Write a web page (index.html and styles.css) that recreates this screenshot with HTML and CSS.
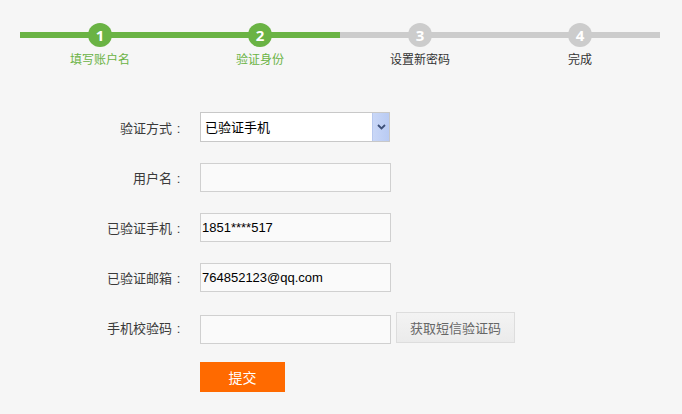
FILE: index.html
```html
<!DOCTYPE html>
<html lang="zh-CN">
<head>
<meta charset="utf-8">
<title>找回密码</title>
<link rel="stylesheet" href="styles.css">
</head>
<body>
<div class="steps">
  <div class="step done"><span class="num">1</span><span class="step-label">填写账户名</span></div>
  <div class="step done"><span class="num">2</span><span class="step-label">验证身份</span></div>
  <div class="step"><span class="num">3</span><span class="step-label">设置新密码</span></div>
  <div class="step"><span class="num">4</span><span class="step-label">完成</span></div>
</div>
<form class="form">
  <div class="row">
    <label class="label">验证方式<span class="colon">:</span></label>
    <div class="select">
      <span class="select-text">已验证手机</span>
      <span class="select-arrow"><svg width="9" height="6" viewBox="0 0 9 6"><path d="M1 1 L4.5 4.5 L8 1" fill="none" stroke="#3d5078" stroke-width="1.8"/></svg></span>
    </div>
  </div>
  <div class="row">
    <label class="label">用户名<span class="colon">:</span></label>
    <input class="input" type="text" value="">
  </div>
  <div class="row">
    <label class="label">已验证手机<span class="colon">:</span></label>
    <input class="input" type="text" value="1851****517">
  </div>
  <div class="row">
    <label class="label">已验证邮箱<span class="colon">:</span></label>
    <input class="input" type="text" value="764852123@qq.com">
  </div>
  <div class="row row-code">
    <label class="label">手机校验码<span class="colon">:</span></label>
    <input class="input" type="text" value="">
    <button class="btn-sms" type="button">获取短信验证码</button>
  </div>
  <div class="row">
    <span class="label"></span>
    <button class="btn-submit" type="button">提交</button>
  </div>
</form>
</body>
</html>
```
FILE: styles.css
```css
html, body {
  margin: 0;
  padding: 0;
  background: #f6f6f6;
  font-family: "Noto Sans CJK SC", "Liberation Sans", sans-serif;
  color: #333;
}

.steps {
  display: grid;
  grid-template-columns: repeat(4, 160px);
  margin: 23px 20px 0;
}

.step {
  position: relative;
  display: flex;
  flex-direction: column;
  align-items: center;
}

.step::before {
  content: "";
  position: absolute;
  left: 0;
  right: 0;
  top: 9px;
  height: 6px;
  background: #cccccc;
}

.step.done::before {
  background: #6ab344;
}

.num {
  position: relative;
  width: 24px;
  height: 24px;
  border-radius: 50%;
  background: #cccccc;
  color: #fff;
  font-family: "Open Sans", "Liberation Sans", sans-serif;
  font-weight: 700;
  font-size: 15px;
  line-height: 24px;
  text-align: center;
}

.step.done .num {
  background: #6ab344;
}

.step-label {
  margin-top: 4px;
  font-size: 12px;
  line-height: 16px;
  color: #333;
}

.step.done .step-label {
  color: #6ab344;
}

.form {
  margin: 45px 0 0;
  display: flex;
  flex-direction: column;
  gap: 20px;
}

.row {
  display: flex;
  align-items: center;
  gap: 15px;
  height: 30px;
}

.row-code {
  align-items: flex-start;
  gap: 5px;
}

.row-code .label {
  margin-right: 10px;
  align-self: center;
}

.row-code .input {
  margin-top: 3px;
}

.label {
  width: 185px;
  text-align: right;
  font-size: 13px;
  color: #3a3a3a;
}

.colon {
  display: inline-block;
  width: 13px;
  text-align: center;
  font-family: "Liberation Sans", sans-serif;
}

.select {
  box-sizing: border-box;
  width: 190px;
  height: 30px;
  border: 1px solid #c8c8c8;
  background: #fff;
  display: flex;
  align-items: stretch;
}

.select-text {
  flex: 1;
  padding-left: 4px;
  font-size: 13px;
  line-height: 28px;
  color: #000;
}

.select-arrow {
  width: 16px;
  border-left: 1px solid #b7c8ee;
  background: linear-gradient(to right, #c9d7f7, #b9cbf3);
  display: flex;
  align-items: center;
  justify-content: center;
}

.input {
  box-sizing: border-box;
  width: 191px;
  height: 29px;
  margin: 0;
  border: 1px solid #d0d0d0;
  background: #fafafa;
  padding: 0 0 0 1px;
  font-family: "Liberation Sans", sans-serif;
  font-size: 13px;
  color: #000;
  outline: none;
}

.btn-sms {
  box-sizing: border-box;
  width: 119px;
  height: 31px;
  margin: 0;
  border: 1px solid #dddddd;
  background: linear-gradient(#f3f3f3, #ebebeb);
  color: #666;
  font-family: "Noto Sans CJK SC", sans-serif;
  font-size: 13px;
  padding: 0;
}

.btn-submit {
  box-sizing: border-box;
  width: 85px;
  height: 31px;
  border: none;
  background: #ff6a00;
  color: #fff;
  font-family: "Noto Sans CJK SC", sans-serif;
  font-size: 14px;
  padding: 0;
}
```
